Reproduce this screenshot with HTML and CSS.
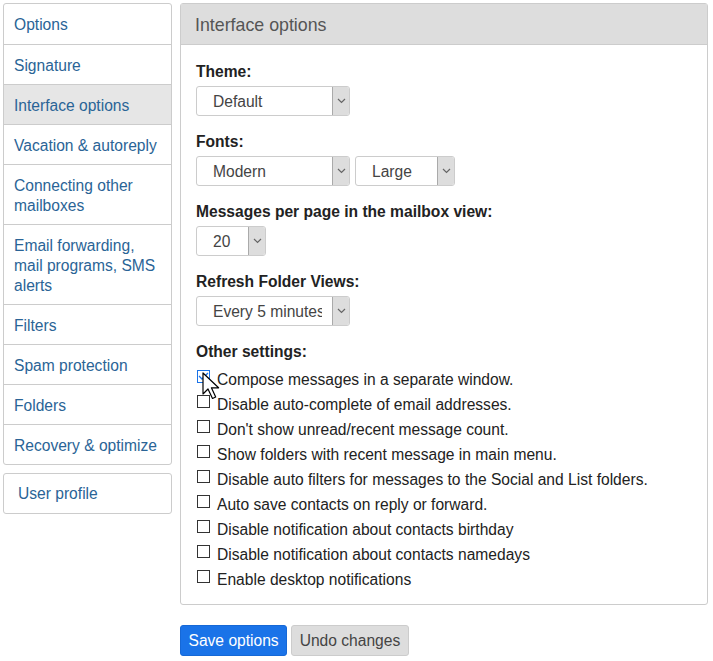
FILE: index.html
```html
<!DOCTYPE html>
<html>
<head>
<meta charset="utf-8">
<link rel="stylesheet" href="styles.css">
</head>
<body>
<div class="page">
  <aside class="side">
    <nav class="menu">
      <a class="item">Options</a>
      <a class="item">Signature</a>
      <a class="item active">Interface options</a>
      <a class="item">Vacation &amp; autoreply</a>
      <a class="item">Connecting other mailboxes</a>
      <a class="item">Email forwarding, mail programs, SMS alerts</a>
      <a class="item">Filters</a>
      <a class="item">Spam protection</a>
      <a class="item">Folders</a>
      <a class="item">Recovery &amp; optimize</a>
    </nav>
    <nav class="menu">
      <a class="item profile">User profile</a>
    </nav>
  </aside>
  <main class="main">
    <section class="panel">
      <header class="panel-head">Interface options</header>
      <div class="panel-body">
        <div class="field">
          <label class="label">Theme:</label>
          <div class="row">
            <div class="select w153"><span class="val">Default</span><span class="arrow"><svg width="9" height="6" viewBox="0 0 9 6"><path d="M1 1l3.5 3.5L8 1" fill="none" stroke="#666" stroke-width="1.2"/></svg></span></div>
          </div>
        </div>
        <div class="field">
          <label class="label">Fonts:</label>
          <div class="row">
            <div class="select w153"><span class="val">Modern</span><span class="arrow"><svg width="9" height="6" viewBox="0 0 9 6"><path d="M1 1l3.5 3.5L8 1" fill="none" stroke="#666" stroke-width="1.2"/></svg></span></div>
            <div class="select w100"><span class="val">Large</span><span class="arrow"><svg width="9" height="6" viewBox="0 0 9 6"><path d="M1 1l3.5 3.5L8 1" fill="none" stroke="#666" stroke-width="1.2"/></svg></span></div>
          </div>
        </div>
        <div class="field">
          <label class="label">Messages per page in the mailbox view:</label>
          <div class="row">
            <div class="select w70"><span class="val">20</span><span class="arrow"><svg width="9" height="6" viewBox="0 0 9 6"><path d="M1 1l3.5 3.5L8 1" fill="none" stroke="#666" stroke-width="1.2"/></svg></span></div>
          </div>
        </div>
        <div class="field">
          <label class="label">Refresh Folder Views:</label>
          <div class="row">
            <div class="select w153"><span class="val clip">Every 5 minutes</span><span class="arrow"><svg width="9" height="6" viewBox="0 0 9 6"><path d="M1 1l3.5 3.5L8 1" fill="none" stroke="#666" stroke-width="1.2"/></svg></span></div>
          </div>
        </div>
        <div class="field">
          <label class="label">Other settings:</label>
          <ul class="checks">
            <li class="check"><span class="box checked"><svg width="11" height="9" viewBox="0 0 11 9"><path d="M1 4l3 3 6-6" fill="none" stroke="#1a73e8" stroke-width="1.3"/></svg></span>Compose messages in a separate window.
              <svg class="cursor" width="20" height="30" viewBox="0 0 20 30"><path d="M1 1v21l5-5 4.5 9.5 3.2-1.5-4.3-9.2h7.2z" fill="#fff" stroke="#000" stroke-width="1.2" stroke-linejoin="round"/></svg>
            </li>
            <li class="check"><span class="box"></span>Disable auto-complete of email addresses.</li>
            <li class="check"><span class="box"></span>Don't show unread/recent message count.</li>
            <li class="check"><span class="box"></span>Show folders with recent message in main menu.</li>
            <li class="check"><span class="box"></span>Disable auto filters for messages to the Social and List folders.</li>
            <li class="check"><span class="box"></span>Auto save contacts on reply or forward.</li>
            <li class="check"><span class="box"></span>Disable notification about contacts birthday</li>
            <li class="check"><span class="box"></span>Disable notification about contacts namedays</li>
            <li class="check"><span class="box"></span>Enable desktop notifications</li>
          </ul>
        </div>
      </div>
    </section>
    <div class="actions">
      <button class="btn primary">Save options</button>
      <button class="btn">Undo changes</button>
    </div>
  </main>
</div>
</body>
</html>
```
FILE: styles.css
```css
* { box-sizing: border-box; }
body {
  margin: 0;
  background: #fff;
  font-family: "Liberation Sans", Arial, sans-serif;
  font-size: 15.6px;
  color: #222;
}
.page {
  display: flex;
  gap: 8px;
  padding: 3px 5px 0 3px;
}
.side {
  width: 169px;
  flex: none;
  display: flex;
  flex-direction: column;
  gap: 8px;
}
.menu {
  border: 1px solid #ccc;
  border-radius: 3px;
  display: flex;
  flex-direction: column;
}
.item {
  display: block;
  padding: 11px 10px 8px 10px;
  line-height: 20px;
  color: #2a6496;
  border-top: 1px solid #ccc;
}
.item:first-child { border-top: none; padding-top: 11px; padding-bottom: 9px; }
.item.active { background: #e6e6e6; }
.item.profile { padding-left: 14px; padding-top: 10px; padding-bottom: 9px; }
.main {
  flex: 1;
  display: flex;
  flex-direction: column;
}
.panel {
  border: 1px solid #ccc;
  border-radius: 3px;
}
.panel-head {
  background: #ddd;
  border-bottom: 1px solid #ccc;
  height: 41px;
  padding: 1px 14px 0;
  line-height: 40px;
  font-size: 17.8px;
  color: #555;
}
.panel-body {
  padding: 17px 15px 12px 15px;
  display: flex;
  flex-direction: column;
  gap: 16px;
}
.label {
  display: block;
  font-weight: bold;
  line-height: 20px;
  margin-bottom: 4px;
  color: #222;
}
.row { display: flex; gap: 5px; }
.select {
  height: 30px;
  border: 1px solid #ccc;
  border-radius: 3px;
  display: flex;
  align-items: center;
  justify-content: space-between;
  color: #444;
  overflow: hidden;
}
.val {
  padding: 2px 0 0 16px;
  white-space: nowrap;
  overflow: hidden;
  flex: 1;
}
.val.clip { margin-right: 10px; }
.arrow {
  width: 17px;
  flex: none;
  height: 100%;
  background: #ddd;
  border-left: 1px solid #aaa;
  display: flex;
  align-items: center;
  justify-content: center;
}
.w153 { width: 154px; }
.w100 { width: 100px; }
.w70 { width: 70px; }
.checks { list-style: none; margin: 5px 0 0; padding: 0; }
.check {
  position: relative;
  display: flex;
  align-items: center;
  height: 25px;
  color: #222;
}
.box {
  width: 13px;
  height: 13px;
  border: 1px solid #333;
  margin: -6px 7px 0 1px;
  flex: none;
  display: flex;
  align-items: center;
  justify-content: center;
}
.box.checked { border-color: #1a73e8; }
.cursor {
  position: absolute;
  left: 6px;
  top: 5px;
}
.actions {
  display: flex;
  gap: 4px;
  padding-top: 20px;
}
.btn {
  font-family: inherit;
  font-size: 15.6px;
  height: 31px;
  padding: 1px 7.5px 0;
  border: 1px solid #ccc;
  border-radius: 3px;
  background: #ddd;
  color: #444;
}
.btn.primary {
  background: #1a73e8;
  border-color: #1668d6;
  color: #fff;
}
```
